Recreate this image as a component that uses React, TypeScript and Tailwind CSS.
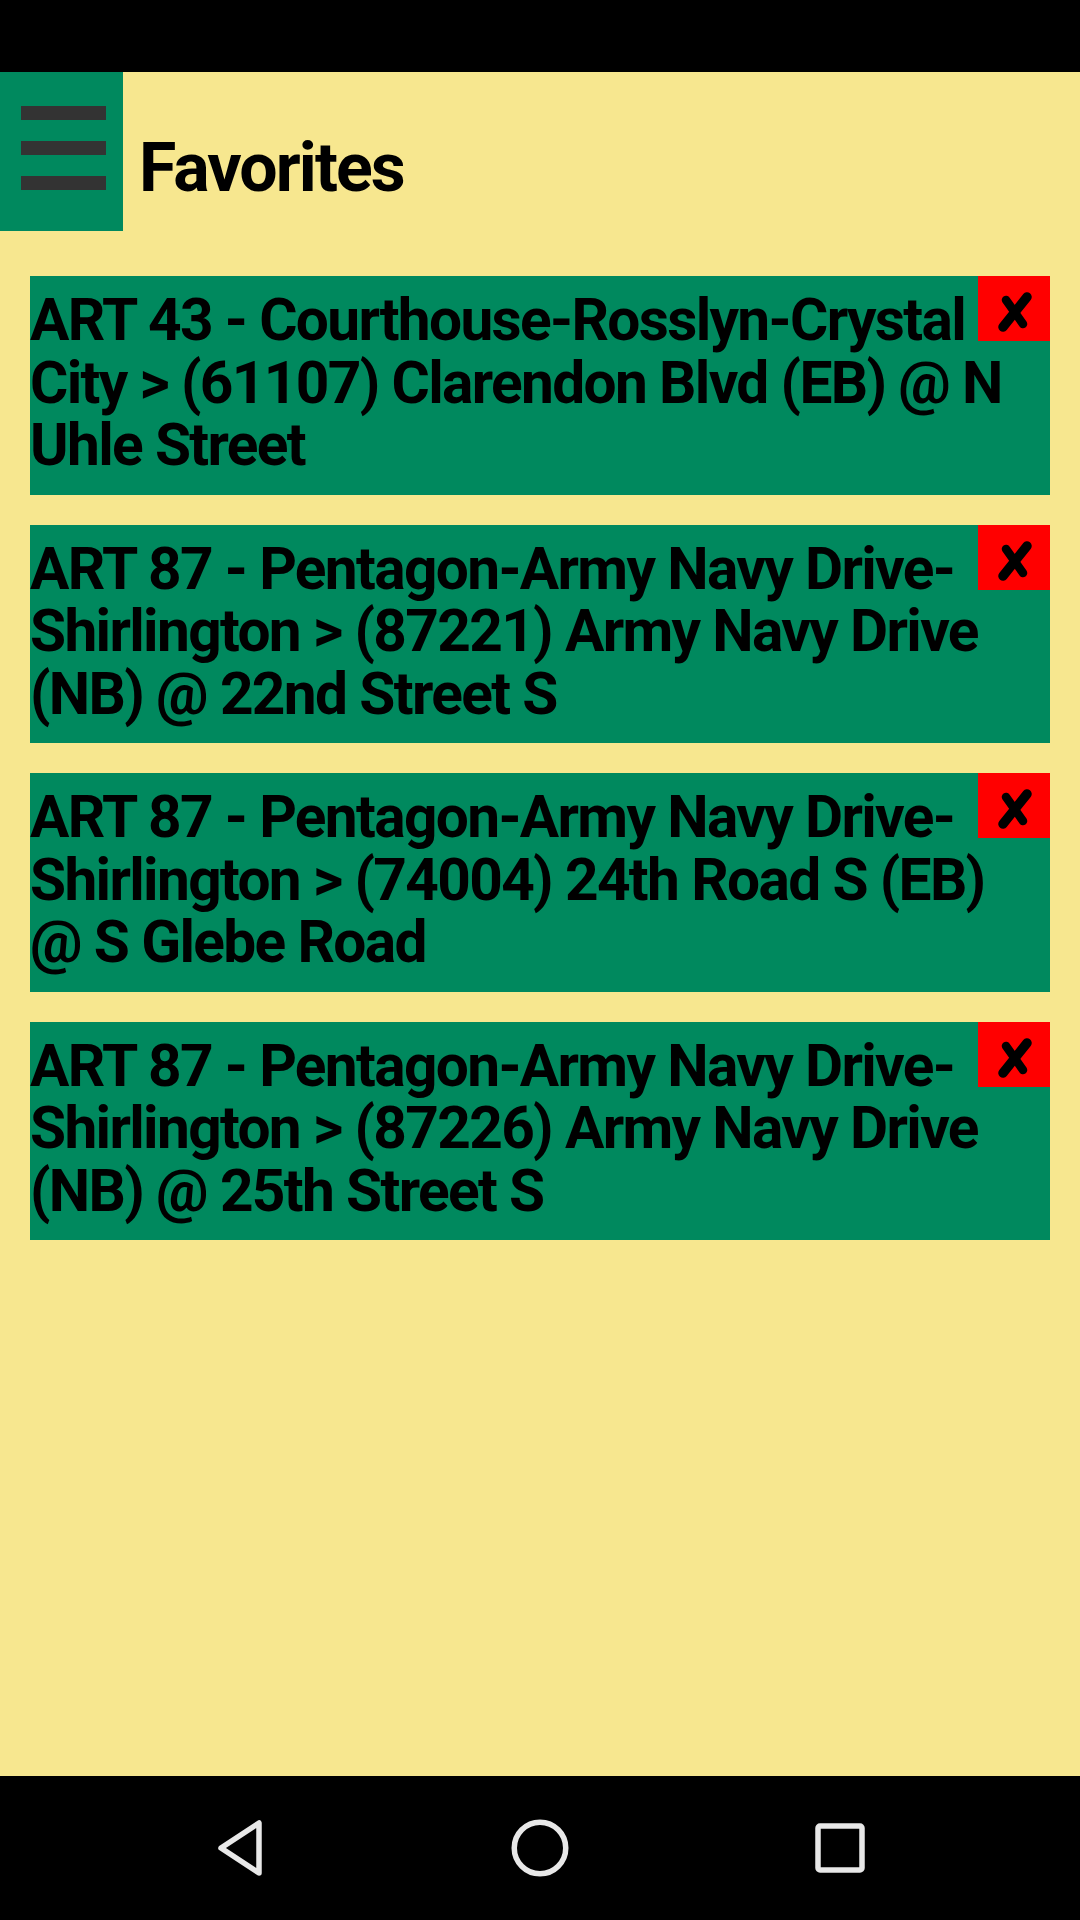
import React from "react";

const items = [
  "ART 43 - Courthouse-Rosslyn-Crystal City > (61107) Clarendon Blvd (EB) @ N Uhle Street",
  "ART 87 - Pentagon-Army Navy Drive-Shirlington > (87221) Army Navy Drive (NB) @ 22nd Street S",
  "ART 87 - Pentagon-Army Navy Drive-Shirlington > (74004) 24th Road S (EB) @ S Glebe Road",
  "ART 87 - Pentagon-Army Navy Drive-Shirlington > (87226) Army Navy Drive (NB) @ 25th Street S",
];

function CrossIcon() {
  return (
    <svg width="72" height="65" viewBox="0 0 72 65">
      <path d="M49 21 L25 51" stroke="#000" strokeWidth="9.5" strokeLinecap="round" />
      <path d="M28 24 L45 48" stroke="#000" strokeWidth="8.5" strokeLinecap="round" />
    </svg>
  );
}

export default function App() {
  return (
    <div
      className="w-[1080px] h-[1920px] flex flex-col overflow-hidden"
      style={{ fontFamily: "Roboto, 'Liberation Sans', sans-serif" }}
    >
      <div className="h-[72px] bg-black shrink-0" />
      <div className="flex-1 bg-[#f7e78f] flex flex-col">
        <div className="flex items-start">
          <div className="w-[123px] h-[159px] bg-[#00895e] flex flex-col pt-[34px] pl-[21px] gap-[21px]">
            <div className="w-[85px] h-[14px] bg-[#333333]" />
            <div className="w-[85px] h-[14px] bg-[#333333]" />
            <div className="w-[85px] h-[14px] bg-[#333333]" />
          </div>
          <div className="ml-[16px] mt-[56px] text-[68px] leading-[80px] font-bold text-black tracking-[-1.9px]">
            Favorites
          </div>
        </div>
        <div className="flex flex-col gap-[30px] px-[30px] pt-[45px]">
          {items.map((t, i) => (
            <div key={i} className="relative bg-[#00895e] pt-[13px] pb-[18px] pr-[20px]">
              <div className="text-[58.6px] leading-[62.5px] font-bold text-black tracking-[-1.65px]">{t}</div>
              <div className="absolute top-0 right-0 w-[72px] h-[65px] bg-[#ff0000]">
                <CrossIcon />
              </div>
            </div>
          ))}
        </div>
      </div>
      <div className="h-[144px] bg-black shrink-0 flex items-center justify-center gap-[236px]">
        <svg width="64" height="64" viewBox="0 0 64 64">
          <path
            d="M51 7 L51 57 L13 32 Z"
            fill="none"
            stroke="#e8e8e8"
            strokeWidth="5.5"
            strokeLinejoin="round"
          />
        </svg>
        <svg width="64" height="64" viewBox="0 0 64 64">
          <circle cx="32" cy="32" r="25.75" fill="none" stroke="#e8e8e8" strokeWidth="5.5" />
        </svg>
        <svg width="64" height="64" viewBox="0 0 64 64">
          <rect x="10" y="10" width="44" height="44" rx="2" fill="none" stroke="#e8e8e8" strokeWidth="5.5" />
        </svg>
      </div>
    </div>
  );
}
